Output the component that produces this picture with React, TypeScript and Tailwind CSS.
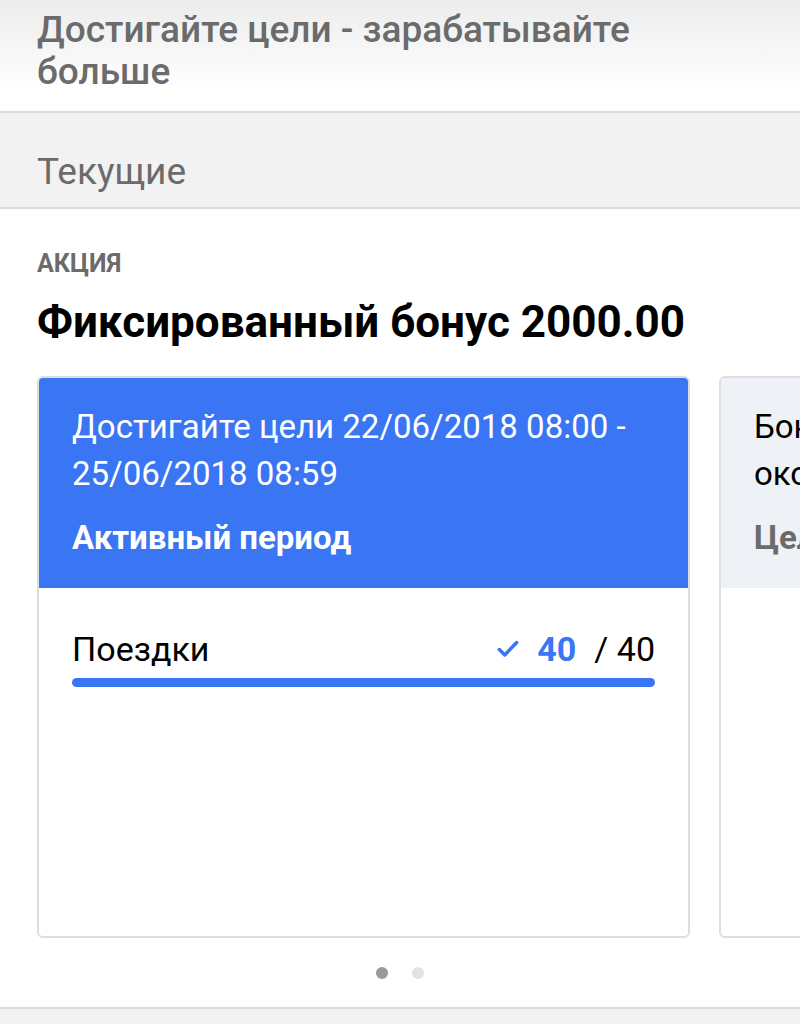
import React from "react";

function Check() {
  return (
    <svg viewBox="0 0 24 24" className="w-[26px] h-[26px]" fill="none" stroke="#3a75f4" strokeWidth="3.2" strokeLinecap="round" strokeLinejoin="round">
      <path d="M4 12.5l5 5L20 6" />
    </svg>
  );
}

export default function App() {
  return (
    <div className="w-[800px] h-[1024px] overflow-hidden bg-white flex flex-col [font-family:Roboto,'Noto_Sans',sans-serif]">
      {/* header */}
      <div className="h-[113px] shrink-0 bg-gradient-to-b from-[#ececec] to-white to-80% px-[37px] pt-[9px] border-b-2 border-[#dcdcdc]">
        <div className="text-[37px] leading-[42px] font-medium text-[#6b6b6b]">
          Достигайте цели - зарабатывайте больше
        </div>
      </div>

      {/* tab */}
      <div className="h-[96px] shrink-0 bg-[#f2f2f2] border-b-2 border-[#dcdcdc] px-[37px] flex items-center">
        <span className="text-[37px] leading-[44px] text-[#6b6b6b] pt-[24px]">Текущие</span>
      </div>

      {/* promo */}
      <div className="flex-1 flex flex-col">
        <div className="px-[37px] pt-[40px]">
          <div className="text-[25px] font-bold text-[#6b6b6b] leading-[30px]">АКЦИЯ</div>
          <div className="mt-[18px] text-[44px] font-bold text-black leading-[50px]">Фиксированный бонус 2000.00</div>
        </div>

        <div className="mt-[29px] flex gap-[29px] pl-[37px] overflow-hidden">
          <div className="w-[653px] h-[562px] shrink-0 rounded-[6px] border-2 border-[#dedede] overflow-hidden flex flex-col">
            <div className="h-[210px] bg-[#3a75f4] px-[33px] pt-[25px] text-white">
              <div className="text-[33px] leading-[47px]">Достигайте цели 22/06/2018 08:00 - 25/06/2018 08:59</div>
              <div className="mt-[23px] text-[33px] font-bold leading-[36px]">Активный период</div>
            </div>
            <div className="px-[33px] pt-[41px]">
              <div className="flex items-center justify-between leading-[40px]">
                <span className="text-[34px] text-black">Поездки</span>
                <span className="flex items-center text-[34px]">
                  <Check />
                  <span className="ml-[16px] font-bold text-[#3a75f4]">40</span>
                  <span className="ml-[18px] text-black">/ 40</span>
                </span>
              </div>
              <div className="mt-[9px] h-[9px] rounded-full bg-[#3a75f4]" />
            </div>
          </div>

          <div className="w-[653px] h-[562px] shrink-0 rounded-[6px] border-2 border-[#dedede] overflow-hidden flex flex-col">
            <div className="h-[210px] bg-[#eef2f6] px-[33px] pt-[25px] text-black">
              <div className="text-[33px] leading-[47px] whitespace-nowrap">Бонус будет начислен по</div>
              <div className="text-[33px] leading-[47px] whitespace-nowrap">окончании периода</div>
              <div className="mt-[23px] text-[33px] font-bold leading-[36px] text-[#6b6b6b] whitespace-nowrap">Цели не достигнуты</div>
            </div>
          </div>
        </div>

        <div className="flex justify-center gap-[24px] mt-[29px] pr-[1px]">
          <div className="w-[12px] h-[12px] rounded-full bg-[#9a9a9a]" />
          <div className="w-[12px] h-[12px] rounded-full bg-[#e2e2e2]" />
        </div>

        <div className="mt-[28px] flex-1 border-t-2 border-[#dcdcdc] bg-[#f2f2f2]" />
      </div>
    </div>
  );
}
